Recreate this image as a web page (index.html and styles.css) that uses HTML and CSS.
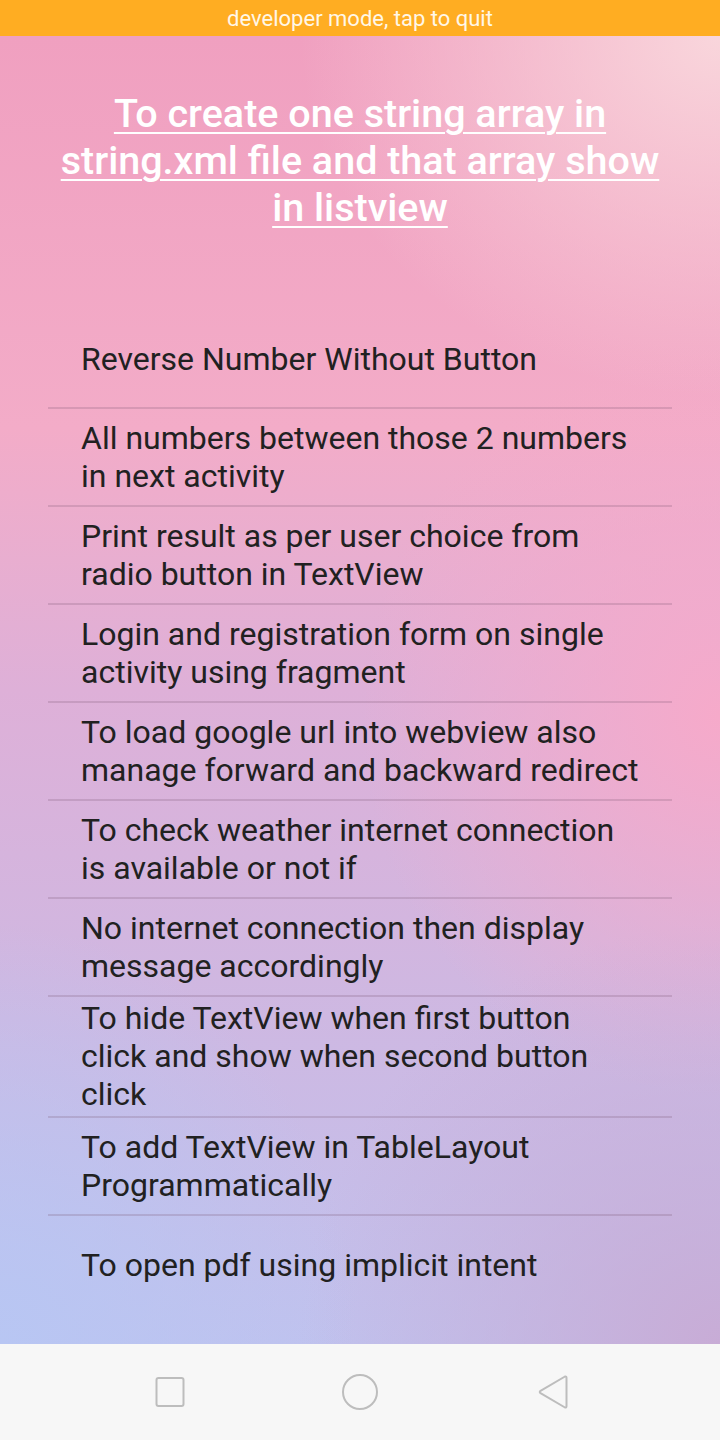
FILE: index.html
```html
<!DOCTYPE html>
<html>
<head>
<meta charset="utf-8">
<link rel="stylesheet" href="styles.css">
</head>
<body>
<div class="devbar">developer mode, tap to quit</div>
<main class="screen">
  <h1 class="title">To create one string array in string.xml file and that array show in listview</h1>
  <ul class="list">
    <li class="item">Reverse Number Without Button</li>
    <li class="item">All numbers between those 2 numbers in next activity</li>
    <li class="item">Print result as per user choice from radio button in TextView</li>
    <li class="item">Login and registration form on single activity using fragment</li>
    <li class="item">To load google url into webview also manage forward and backward redirect</li>
    <li class="item">To check weather internet connection is available or not if</li>
    <li class="item">No internet connection then display message accordingly</li>
    <li class="item">To hide TextView when first button click and show when second button click</li>
    <li class="item">To add TextView in TableLayout Programmatically</li>
    <li class="item">To open pdf using implicit intent</li>
  </ul>
</main>
<nav class="navbar">
  <div class="navslot">
    <svg width="32" height="32" viewBox="0 0 32 32"><rect x="2.5" y="2" width="27" height="28" rx="2" fill="none" stroke="#bdbdbd" stroke-width="2"/></svg>
  </div>
  <div class="navslot">
    <svg width="38" height="38" viewBox="0 0 38 38"><ellipse cx="19" cy="19" rx="17" ry="17" fill="none" stroke="#bdbdbd" stroke-width="2"/></svg>
  </div>
  <div class="navslot back">
    <svg width="34" height="38" viewBox="0 0 34 38"><path d="M29 3.5 Q30.5 3 30.5 5 L30.5 33 Q30.5 35 29 34.5 L4.5 20.2 Q3 19 4.5 17.8 Z" fill="none" stroke="#bdbdbd" stroke-width="2" stroke-linejoin="round"/></svg>
  </div>
</nav>
</body>
</html>
```

FILE: styles.css
```css
* { box-sizing: border-box; }
html, body { margin: 0; padding: 0; }
body {
  width: 720px;
  height: 1440px;
  font-family: Roboto, "Noto Sans", sans-serif;
  display: flex;
  flex-direction: column;
  overflow: hidden;
}
.devbar {
  height: 36px;
  background: #ffad22;
  color: #fff7e8;
  font-size: 22px;
  display: flex;
  align-items: center;
  justify-content: center;
  flex: none;
}
.screen {
  height: 1308px;
  flex: none;
  padding-top: 54px;
  background:
    radial-gradient(ellipse 420px 360px at 100% 0%, rgba(249,214,220,1) 0, rgba(249,214,220,0) 100%),
    radial-gradient(ellipse 360px 420px at 0% 100%, rgba(184,198,243,1) 0, rgba(184,198,243,0) 100%),
    radial-gradient(ellipse 420px 420px at 100% 100%, rgba(200,172,214,1) 0, rgba(200,172,214,0) 100%),
    radial-gradient(ellipse 360px 380px at 100% 52%, rgba(246,170,202,1) 0, rgba(246,170,202,0) 100%),
    linear-gradient(to bottom, #f0a0c0 0%, #f3acc8 30%, #deb0d8 50%, #ceb8e2 75%, #c0c2ee 100%);
}
.title {
  margin: 0 auto;
  width: 630px;
  text-align: center;
  color: #fff;
  font-size: 39.5px;
  font-weight: 500;
  line-height: 47px;
  text-decoration: underline;
  text-decoration-thickness: 2px;
  text-underline-offset: 5px;
}
.list {
  list-style: none;
  margin: 80px 48px 0;
  padding: 0;
}
.item {
  min-height: 98px;
  padding: 2px 32px 3px 33px;
  display: flex;
  align-items: center;
  font-size: 32px;
  line-height: 38px;
  color: #212121;
  border-bottom: 2px solid rgba(120, 80, 110, 0.22);
}
.item:last-child { border-bottom: none; }
.navbar {
  height: 96px;
  flex: none;
  background: #f7f7f7;
  display: flex;
  justify-content: center;
  align-items: center;
}
.navslot {
  width: 190px;
  display: flex;
  justify-content: center;
  align-items: center;
}
.navslot.back { padding-left: 6px; }
```
